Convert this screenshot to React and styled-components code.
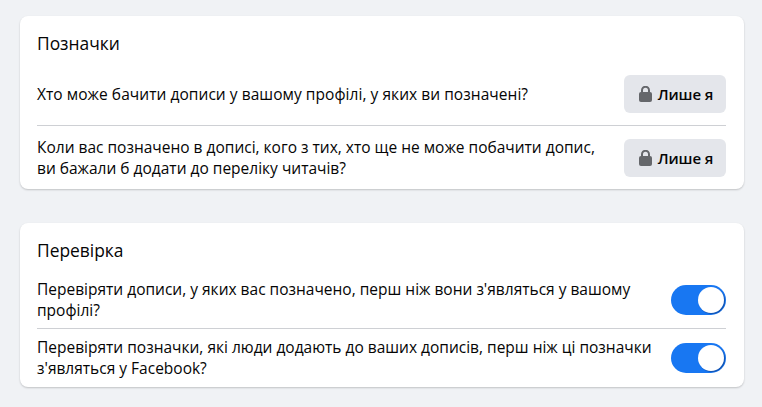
import React from "react";
import styled, { createGlobalStyle } from "styled-components";

const GlobalStyle = createGlobalStyle`
  html, body {
    margin: 0;
    background: #f0f2f5;
  }
  body {
    font-family: "Open Sans", "Noto Sans", sans-serif;
    color: #050505;
  }
`;

const Page = styled.div`
  display: flex;
  flex-direction: column;
  gap: 34px;
  padding: 16px 18px 20px 20px;
`;

const Card = styled.section`
  background: #fff;
  border-radius: 8px;
  padding: 0 18px 0 17px;
  box-shadow: 0 1px 2px rgba(0, 0, 0, 0.2);
`;

const Title = styled.h2`
  margin: 0 0 ${p => p.$after}px;
  padding-top: 16px;
  font-size: 17.4px;
  line-height: 22px;
  font-weight: 500;
`;

const Row = styled.div`
  display: flex;
  align-items: center;
  justify-content: space-between;
  height: ${p => p.$height}px;
`;

const Label = styled.div`
  font-size: 15.5px;
  line-height: 21px;
  font-weight: 500;
  letter-spacing: ${p => p.$spacing || 0}px;
`;

const Divider = styled.div`
  height: 1px;
  background: #ced0d4;
`;

const Button = styled.div`
  display: flex;
  align-items: center;
  justify-content: center;
  gap: 6px;
  width: 102px;
  height: 38px;
  padding-left: 2px;
  box-sizing: border-box;
  border-radius: 6px;
  background: #e4e6eb;
  font-size: 15px;
  font-weight: 600;
  letter-spacing: -0.1px;
`;

const Lock = styled.svg`
  width: 13px;
  height: 16px;
`;

const ToggleTrack = styled.div`
  display: flex;
  align-items: center;
  justify-content: flex-end;
  width: 55px;
  height: 30px;
  padding: 2px;
  box-sizing: border-box;
  border-radius: 15px;
  background: #1877f2;
`;

const Knob = styled.div`
  width: 26px;
  height: 26px;
  border-radius: 50%;
  background: #fff;
  box-shadow: 1px 1px 1px rgba(10, 50, 120, 0.55);
`;

const LockIcon = () => (
  <Lock viewBox="0 0 13 16" aria-hidden="true">
    <path d="M3 7V4.2a3.5 3.5 0 0 1 7 0V7" fill="none" stroke="#65676b" strokeWidth="2" />
    <rect x="0" y="6" width="13" height="10" rx="2" fill="#65676b" />
  </Lock>
);

const Toggle = () => (
  <ToggleTrack>
    <Knob />
  </ToggleTrack>
);

export default function App() {
  return (
    <Page>
      <GlobalStyle />
      <Card>
        <Title $after={9}>Позначки</Title>
        <Row $height={62}>
          <Label $spacing={0.05}>Хто може бачити дописи у вашому профілі, у яких ви позначені?</Label>
          <Button>
            <LockIcon />
            Лише я
          </Button>
        </Row>
        <Divider />
        <Row $height={63}>
          <Label>
            Коли вас позначено в дописі, кого з тих, хто ще не може побачити допис,
            <br />
            ви бажали б додати до переліку читачів?
          </Label>
          <Button>
            <LockIcon />
            Лише я
          </Button>
        </Row>
      </Card>

      <Card>
        <Title $after={11}>Перевірка</Title>
        <Row $height={56}>
          <Label>
            Перевіряти дописи, у яких вас позначено, перш ніж вони з'являться у вашому
            <br />
            профілі?
          </Label>
          <Toggle />
        </Row>
        <Divider />
        <Row $height={58}>
          <Label>
            Перевіряти позначки, які люди додають до ваших дописів, перш ніж ці позначки
            <br />
            з'являться у Facebook?
          </Label>
          <Toggle />
        </Row>
      </Card>
    </Page>
  );
}
